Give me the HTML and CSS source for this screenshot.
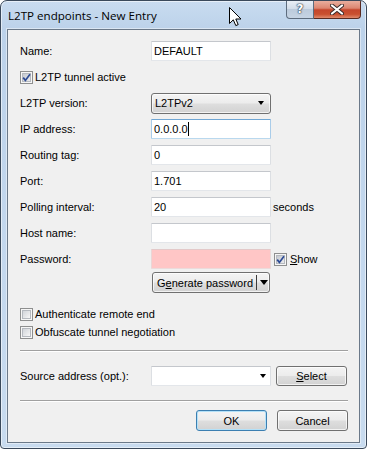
FILE: index.html
```html
<!DOCTYPE html>
<html>
<head>
<meta charset="utf-8">
<link rel="stylesheet" href="styles.css">
</head>
<body>
<div class="window">
  <div class="titlebar">
    <span class="title">L2TP endpoints - New Entry</span>
    <div class="caption">
      <div class="cap-help">?</div>
      <div class="cap-close">
        <svg width="14" height="11" viewBox="0 0 14 11">
          <path d="M2 1.5 L12 9.5 M12 1.5 L2 9.5" stroke="#3a2a2a" stroke-width="4" stroke-linecap="round"/>
          <path d="M2 1.5 L12 9.5 M12 1.5 L2 9.5" stroke="#ffffff" stroke-width="2.2" stroke-linecap="round"/>
        </svg>
      </div>
    </div>
  </div>
  <div class="client">
    <div class="row">
      <span class="label">Name:</span>
      <div class="textbox">DEFAULT</div>
    </div>
    <div class="row">
      <span class="cb checked"><svg class="check" width="13" height="13" viewBox="0 0 13 13"><path d="M3.2 6.6 L5.4 9.4 L10 3.2" fill="none" stroke="#2c4a94" stroke-width="1.7"/></svg></span>
      <span class="cb-text">L2TP tunnel active</span>
    </div>
    <div class="row">
      <span class="label">L2TP version:</span>
      <div class="combo-btn"><span>L2TPv2</span><span class="tri"></span></div>
    </div>
    <div class="row">
      <span class="label">IP address:</span>
      <div class="textbox focus"><span class="caret">0.0.0.0</span></div>
    </div>
    <div class="row">
      <span class="label">Routing tag:</span>
      <div class="textbox">0</div>
    </div>
    <div class="row">
      <span class="label">Port:</span>
      <div class="textbox">1.701</div>
    </div>
    <div class="row">
      <span class="label">Polling interval:</span>
      <div class="textbox">20</div>
      <span class="suffix">seconds</span>
    </div>
    <div class="row">
      <span class="label">Host name:</span>
      <div class="textbox"></div>
    </div>
    <div class="row">
      <span class="label">Password:</span>
      <div class="textbox pink"></div>
      <span class="cb checked show-cb"><svg class="check" width="13" height="13" viewBox="0 0 13 13"><path d="M3.2 6.6 L5.4 9.4 L10 3.2" fill="none" stroke="#2c4a94" stroke-width="1.7"/></svg></span>
      <span class="show-text"><u>S</u>how</span>
    </div>
    <div class="split-btn">
      <span class="split-label">G<u>e</u>nerate password</span>
      <span class="split-sep"></span>
      <span class="tri big"></span>
    </div>
    <div class="cbrow first">
      <span class="cb"></span>
      <span class="cb-text">Authenticate remote end</span>
    </div>
    <div class="cbrow">
      <span class="cb"></span>
      <span class="cb-text">Obfuscate tunnel negotiation</span>
    </div>
    <div class="sep"></div>
    <div class="row source">
      <span class="label">Source address (opt.):</span>
      <div class="textbox combo-edit"><span class="tri"></span></div>
      <div class="btn select"><u>S</u>elect</div>
    </div>
    <div class="sep sep2"></div>
    <div class="buttons">
      <div class="btn default">OK</div>
      <div class="btn">Cancel</div>
    </div>
  </div>
  <svg class="cursor" width="13" height="20" viewBox="0 0 13 20">
    <path d="M0.5 0.5 V16.5 L4.3 12.8 L6.8 18.6 L9.2 17.6 L6.8 12 H12 Z" fill="#fff" stroke="#000" stroke-width="1" stroke-linejoin="miter"/>
  </svg>
</div>
</body>
</html>
```
FILE: styles.css
```css
html, body {
  margin: 0;
  padding: 0;
  background: #ffffff;
}
body {
  font-family: "Liberation Sans", Arial, sans-serif;
  font-size: 11px;
  color: #000;
}
.window {
  position: relative;
  width: 367px;
  height: 449px;
  box-sizing: border-box;
  border: 1px solid #3a495b;
  border-radius: 7px 7px 4px 4px;
  background: linear-gradient(180deg, #c9dcf0 0%, #bcd2ea 28px, #c4d8ee 60%, #c8dbef 100%);
  box-shadow: inset 0 0 0 1px rgba(255, 255, 255, 0.55);
  padding: 0 6px 5px 6px;
  display: flex;
  flex-direction: column;
  overflow: hidden;
}
.titlebar {
  height: 28px;
  flex: none;
  display: flex;
  justify-content: space-between;
  align-items: flex-start;
}
.title {
  font-family: "Open Sans", "Liberation Sans", sans-serif;
  font-size: 11.6px;
  line-height: 29px;
  padding-left: 1px;
  color: #000;
}
.caption {
  display: flex;
  margin-right: -1px;
}
.cap-help {
  width: 28px;
  height: 18px;
  box-sizing: border-box;
  border: 1px solid #5d6c7e;
  border-top: none;
  border-radius: 0 0 0 4px;
  background: linear-gradient(180deg, #e9eff6 0%, #d3dde9 45%, #bccbdc 50%, #c6d4e4 100%);
  color: #fff;
  font-family: "DejaVu Sans", sans-serif;
  font-weight: bold;
  font-size: 12px;
  line-height: 17px;
  text-align: center;
  text-shadow: 0 0 1px #2b3a4c, 0 0 1px #2b3a4c, 0 0 2px #2b3a4c;
}
.cap-close {
  width: 47px;
  height: 18px;
  box-sizing: border-box;
  border: 1px solid #5a2a20;
  border-top: none;
  border-left: none;
  border-radius: 0 0 4px 0;
  background: linear-gradient(180deg, #e9ae9e 0%, #dc8671 42%, #c5462c 52%, #c9502f 78%, #e08a6c 100%);
  display: flex;
  align-items: center;
  justify-content: center;
}
.client {
  flex: 1;
  background: #f0f0f0;
  border: 1px solid #6b7989;
  box-shadow: 0 0 0 1px rgba(255, 255, 255, 0.45);
  padding: 11px 11px 0 12px;
  display: flex;
  flex-direction: column;
}
.row {
  display: flex;
  align-items: center;
  height: 20px;
  margin-bottom: 6px;
  flex: none;
}
.label {
  width: 131px;
  flex: none;
}
.textbox {
  width: 120px;
  height: 20px;
  box-sizing: border-box;
  background: #fff;
  border: 1px solid;
  border-color: #c4c7cc #dcdfe3 #e3e6ea #dcdfe3;
  border-radius: 1px;
  padding: 0 3px 0 2px;
  display: flex;
  align-items: center;
  flex: none;
}
.textbox.focus {
  border-color: #6fa6d4 #a9cce9 #b9d8ee #a9cce9;
}
.caret {
  border-right: 1px solid #000;
  padding-right: 0;
  line-height: 14px;
}
.textbox.pink {
  background: #ffc6c6;
  border-color: #e3c9c9 #ead6d6 #ecdada #ead6d6;
}
.suffix {
  margin-left: 2px;
}
.combo-btn {
  width: 120px;
  height: 21px;
  box-sizing: border-box;
  border: 1px solid #707070;
  border-radius: 3px;
  background: linear-gradient(180deg, #f4f4f4 0%, #ececec 48%, #dedede 52%, #d2d2d2 100%);
  box-shadow: inset 0 0 0 1px rgba(255, 255, 255, 0.7);
  padding: 0 6px 0 3px;
  display: flex;
  align-items: center;
  justify-content: space-between;
  flex: none;
}
.tri {
  width: 0;
  height: 0;
  border-left: 3.5px solid transparent;
  border-right: 3.5px solid transparent;
  border-top: 4px solid #000;
}
.tri.big {
  border-left-width: 4px;
  border-right-width: 4px;
  border-top-width: 5px;
}
.cb {
  position: relative;
  width: 13px;
  height: 13px;
  box-sizing: border-box;
  border: 1px solid #8e8f8f;
  background: #f6f6f6;
  flex: none;
}
.cb::before {
  content: "";
  position: absolute;
  left: 1px;
  top: 1px;
  right: 1px;
  bottom: 1px;
  border: 1px solid #b5b9bf;
  background: linear-gradient(135deg, #d2d5da 0%, #e7e8ea 60%, #f7f7f7 100%);
}
.cb.checked::before {
  background: linear-gradient(135deg, #c6cad1 0%, #dadce0 60%, #ececec 100%);
}
.check {
  position: absolute;
  left: -1px;
  top: -1px;
}
.cb-text {
  margin-left: 2px;
}
.show-cb {
  margin-left: 3px;
}
.show-text {
  margin-left: 3px;
}
.split-btn {
  margin-top: -3px;
  margin-left: 132px;
  width: 118px;
  height: 21px;
  box-sizing: border-box;
  border: 1px solid #707070;
  border-radius: 3px;
  background: linear-gradient(180deg, #f4f4f4 0%, #ececec 48%, #dedede 52%, #d2d2d2 100%);
  box-shadow: inset 0 0 0 1px rgba(255, 255, 255, 0.7);
  display: flex;
  align-items: center;
  padding-left: 4px;
  flex: none;
}
.split-label {
  width: 99px;
  flex: none;
}
.split-sep {
  width: 1px;
  height: 15px;
  background: #3c3c3c;
  margin-right: 3px;
  flex: none;
}
.cbrow {
  display: flex;
  align-items: center;
  height: 18px;
  flex: none;
}
.cbrow.first {
  margin-top: 12px;
}
.sep {
  margin-top: 9px;
  height: 1px;
  background: #a0a0a0;
  border-bottom: 1px solid #ffffff;
  flex: none;
}
.row.source {
  margin-top: 14px;
  margin-bottom: 0;
}
.combo-edit {
  justify-content: flex-end;
  padding-right: 4px;
}
.btn {
  width: 71px;
  height: 21px;
  box-sizing: border-box;
  border: 1px solid #707070;
  border-radius: 3px;
  background: linear-gradient(180deg, #f4f4f4 0%, #ececec 48%, #dedede 52%, #d2d2d2 100%);
  box-shadow: inset 0 0 0 1px rgba(255, 255, 255, 0.7);
  display: flex;
  align-items: center;
  justify-content: center;
  flex: none;
}
.btn.select {
  margin-left: 5px;
  height: 20px;
}
.sep2 {
  margin-top: 14px;
}
.buttons {
  margin-top: 8px;
  display: flex;
  justify-content: flex-end;
  gap: 10px;
}
.btn.default {
  border-color: #3c7fb1;
  box-shadow: inset 0 0 0 1px #b4e1f8;
}
.cursor {
  position: absolute;
  left: 228px;
  top: 6px;
}
```
